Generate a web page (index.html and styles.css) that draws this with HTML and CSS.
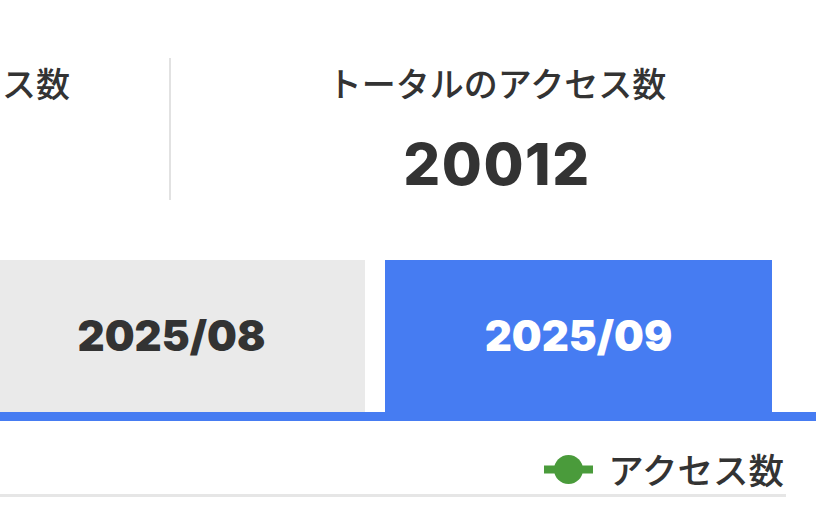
FILE: index.html
```html
<!DOCTYPE html>
<html lang="ja">
<head>
<meta charset="utf-8">
<title>アクセス数</title>
<link rel="stylesheet" href="styles.css">
</head>
<body>
<div class="page">
  <section class="stats">
    <div class="stat stat-prev">
      <div class="stat-label">今月のアクセス数</div>
    </div>
    <div class="stat stat-total">
      <div class="stat-label">トータルのアクセス数</div>
      <div class="stat-value">20012</div>
    </div>
  </section>

  <nav class="tabs">
    <div class="tab">2025/08</div>
    <div class="tab tab-active">2025/09</div>
  </nav>

  <div class="legend">
    <div class="legend-item">
      <svg class="legend-icon" width="49" height="29" viewBox="0 0 49 29">
        <rect x="0" y="10.5" width="49" height="8" fill="#4a9b3b"/>
        <circle cx="24.5" cy="14.5" r="14.5" fill="#4a9b3b"/>
      </svg>
      <span class="legend-text">アクセス数</span>
    </div>
  </div>
</div>
</body>
</html>
```

FILE: styles.css
```css
html, body {
  margin: 0;
  padding: 0;
  background: #ffffff;
  overflow: hidden;
}

body {
  font-family: "Noto Sans CJK JP", "Noto Sans", sans-serif;
  color: #333333;
}

.page {
  width: 816px;
}

.stats {
  display: flex;
  margin-top: 58px;
  height: 142px;
}

.stat-prev {
  width: 169px;
  flex-shrink: 0;
  display: flex;
  flex-direction: column;
  align-items: flex-end;
  padding-right: 99px;
  box-sizing: border-box;
}

.stat-total {
  width: 652px;
  flex-shrink: 0;
  border-left: 2px solid #e2e2e2;
  display: flex;
  flex-direction: column;
  align-items: center;
}

.stat-label {
  font-size: 34px;
  font-weight: 500;
  line-height: 48px;
  padding-top: 1px;
  white-space: nowrap;
}

.stat-value {
  font-family: Inter, "Liberation Sans", sans-serif;
  font-size: 58px;
  font-weight: 800;
  letter-spacing: 1.5px;
  line-height: 60px;
  margin-top: 27px;
}

.tabs {
  display: flex;
  gap: 20px;
  margin-top: 60px;
  margin-left: -22px;
  width: 838px;
  border-bottom: 9px solid #467cf2;
}

.tab {
  width: 387px;
  height: 152px;
  flex-shrink: 0;
  display: flex;
  align-items: center;
  justify-content: center;
  background: #eaeaea;
  color: #333333;
  font-family: Inter, "Liberation Sans", sans-serif;
  font-size: 42px;
  font-weight: 900;
  padding-bottom: 2px;
  box-sizing: border-box;
}

.tab-active {
  background: #467cf2;
  color: #ffffff;
}

.legend {
  width: 786px;
  display: flex;
  justify-content: flex-end;
  padding-top: 24px;
  padding-bottom: 1px;
  border-bottom: 3px solid #e6e6e6;
}

.legend-item {
  display: flex;
  align-items: center;
  gap: 15px;
  padding-right: 2px;
}

.legend-icon {
  display: block;
}

.legend-text {
  font-size: 35.5px;
  font-weight: 500;
  line-height: 48px;
}
```
